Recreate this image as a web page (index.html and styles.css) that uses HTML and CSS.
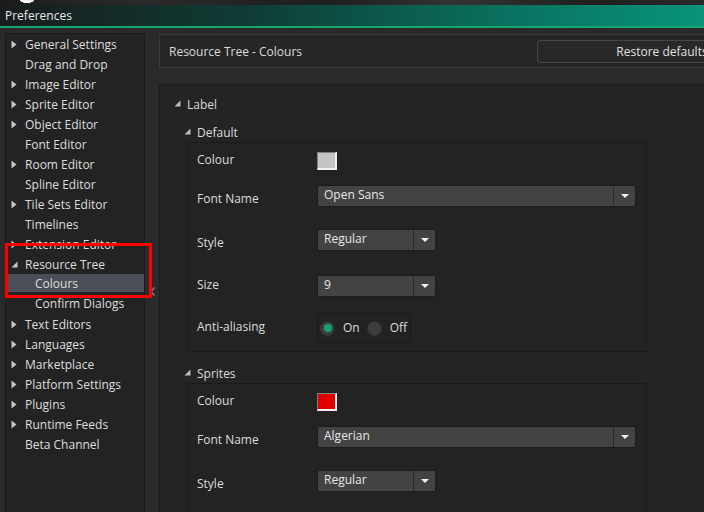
FILE: index.html
```html
<!DOCTYPE html>
<html>
<head>
<meta charset="utf-8">
<link rel="stylesheet" href="styles.css">
</head>
<body>
<div class="strip"></div>
<div class="titlebar">Preferences</div>
<div class="main">
  <div class="tree">
    <div class="item"><span class="arw"><svg width="6" height="9" viewBox="0 0 6 9"><path d="M0.5 0.5L5.5 4.5L0.5 8.5Z"/></svg></span>General Settings</div>
    <div class="item"><span class="arw"></span>Drag and Drop</div>
    <div class="item"><span class="arw"><svg width="6" height="9" viewBox="0 0 6 9"><path d="M0.5 0.5L5.5 4.5L0.5 8.5Z"/></svg></span>Image Editor</div>
    <div class="item"><span class="arw"><svg width="6" height="9" viewBox="0 0 6 9"><path d="M0.5 0.5L5.5 4.5L0.5 8.5Z"/></svg></span>Sprite Editor</div>
    <div class="item"><span class="arw"><svg width="6" height="9" viewBox="0 0 6 9"><path d="M0.5 0.5L5.5 4.5L0.5 8.5Z"/></svg></span>Object Editor</div>
    <div class="item"><span class="arw"></span>Font Editor</div>
    <div class="item"><span class="arw"><svg width="6" height="9" viewBox="0 0 6 9"><path d="M0.5 0.5L5.5 4.5L0.5 8.5Z"/></svg></span>Room Editor</div>
    <div class="item"><span class="arw"></span>Spline Editor</div>
    <div class="item"><span class="arw"><svg width="6" height="9" viewBox="0 0 6 9"><path d="M0.5 0.5L5.5 4.5L0.5 8.5Z"/></svg></span>Tile Sets Editor</div>
    <div class="item"><span class="arw"></span>Timelines</div>
    <div class="item"><span class="arw"><svg width="6" height="9" viewBox="0 0 6 9"><path d="M0.5 0.5L5.5 4.5L0.5 8.5Z"/></svg></span>Extension Editor</div>
    <div class="item"><span class="arw"><svg width="7" height="7" viewBox="0 0 7 7"><path d="M6.5 0.5V6.5H0.5Z"/></svg></span>Resource Tree</div>
    <div class="item child sel"><span class="arw"></span>Colours</div>
    <div class="item child tall"><span class="arw"></span>Confirm Dialogs</div>
    <div class="item"><span class="arw"><svg width="6" height="9" viewBox="0 0 6 9"><path d="M0.5 0.5L5.5 4.5L0.5 8.5Z"/></svg></span>Text Editors</div>
    <div class="item"><span class="arw"><svg width="6" height="9" viewBox="0 0 6 9"><path d="M0.5 0.5L5.5 4.5L0.5 8.5Z"/></svg></span>Languages</div>
    <div class="item"><span class="arw"><svg width="6" height="9" viewBox="0 0 6 9"><path d="M0.5 0.5L5.5 4.5L0.5 8.5Z"/></svg></span>Marketplace</div>
    <div class="item"><span class="arw"><svg width="6" height="9" viewBox="0 0 6 9"><path d="M0.5 0.5L5.5 4.5L0.5 8.5Z"/></svg></span>Platform Settings</div>
    <div class="item"><span class="arw"><svg width="6" height="9" viewBox="0 0 6 9"><path d="M0.5 0.5L5.5 4.5L0.5 8.5Z"/></svg></span>Plugins</div>
    <div class="item"><span class="arw"><svg width="6" height="9" viewBox="0 0 6 9"><path d="M0.5 0.5L5.5 4.5L0.5 8.5Z"/></svg></span>Runtime Feeds</div>
    <div class="item"><span class="arw"></span>Beta Channel</div>
  </div>
  <div class="splitter"><svg width="5" height="9" viewBox="0 0 5 9"><path d="M4.5 0.5L1 4.5L4.5 8.5" fill="none" stroke="#8a8a8a" stroke-width="1.2"/></svg></div>
  <div class="right">
    <div class="header">
      <div class="htitle">Resource Tree - Colours</div>
      <div class="restore">Restore defaults</div>
    </div>
    <div class="content">
      <div class="sec"><span class="tri"><svg width="7" height="7" viewBox="0 0 7 7"><path d="M6.5 0.5V6.5H0.5Z"/></svg></span>Label</div>
      <div class="sub">
        <div class="sec"><span class="tri"><svg width="7" height="7" viewBox="0 0 7 7"><path d="M6.5 0.5V6.5H0.5Z"/></svg></span>Default</div>
        <div class="group">
          <div class="row r-colour"><div class="lbl">Colour</div><div class="sw grey"></div></div>
          <div class="row r-font"><div class="lbl low">Font Name</div><div class="dd wide"><div class="val">Open Sans</div><div class="btn"><svg width="8" height="4" viewBox="0 0 8 4"><path d="M0 0H8L4 4Z"/></svg></div></div></div>
          <div class="row r-style"><div class="lbl low">Style</div><div class="dd narrow"><div class="val">Regular</div><div class="btn"><svg width="8" height="4" viewBox="0 0 8 4"><path d="M0 0H8L4 4Z"/></svg></div></div></div>
          <div class="row r-size"><div class="lbl">Size</div><div class="dd narrow"><div class="val">9</div><div class="btn"><svg width="8" height="4" viewBox="0 0 8 4"><path d="M0 0H8L4 4Z"/></svg></div></div></div>
          <div class="row r-aa"><div class="lbl">Anti-aliasing</div>
            <div class="radios"><span class="rb on"></span><span class="rtxt">On</span><span class="rb off"></span><span class="rtxt">Off</span></div>
          </div>
        </div>
        <div class="sec sec2"><span class="tri"><svg width="7" height="7" viewBox="0 0 7 7"><path d="M6.5 0.5V6.5H0.5Z"/></svg></span>Sprites</div>
        <div class="group open">
          <div class="row r-colour"><div class="lbl">Colour</div><div class="sw red"></div></div>
          <div class="row r-font"><div class="lbl low">Font Name</div><div class="dd wide"><div class="val">Algerian</div><div class="btn"><svg width="8" height="4" viewBox="0 0 8 4"><path d="M0 0H8L4 4Z"/></svg></div></div></div>
          <div class="row r-style"><div class="lbl low">Style</div><div class="dd narrow"><div class="val">Regular</div><div class="btn"><svg width="8" height="4" viewBox="0 0 8 4"><path d="M0 0H8L4 4Z"/></svg></div></div></div>
        </div>
      </div>
    </div>
  </div>
</div>
<div class="highlight"></div>
</body>
</html>
```
FILE: styles.css
```css
* { box-sizing: border-box; }
body {
  margin: 0;
  width: 704px;
  height: 512px;
  overflow: hidden;
  position: relative;
  background: #2a2a2a;
  font-family: "Open Sans", "DejaVu Sans", sans-serif;
  font-size: 12px;
  color: #dcdcdc;
}
.strip {
  height: 5px;
  background:
    radial-gradient(ellipse 10px 4px at 27px 0, #f4f4f4 70%, rgba(255,255,255,0) 75%),
    linear-gradient(90deg, #1c1c1c, #2b2b2b 20%, #1e1e1e 45%, #333 65%, #1f1f1f 85%, #2a2a2a);
}
.titlebar {
  height: 23px;
  line-height: 22px;
  padding-left: 5px;
  color: #e8e8e8;
  background: linear-gradient(90deg, #181c1c 0%, #0f3c35 35%, #0a6e5d 70%, #079479 100%);
  border-bottom: 2px solid #16a66e;
}
.main {
  display: flex;
  padding: 5px 0 0 5px;
}
.tree {
  width: 140px;
  height: 490px;
  flex: none;
  border: 1px solid #1b1b1b;
  background: #232323;
}
.item {
  height: 20px;
  display: flex;
  align-items: center;
  padding-left: 5px;
  color: #dedede;
  white-space: nowrap;
}
.item .arw {
  width: 14px;
  flex: none;
  display: flex;
  align-items: center;
}
.item svg { fill: #c8c8c8; }
.item.child { padding-left: 15px; }
.item.sel {
  height: 18px;
  background: #4b5058;
  margin-left: 1px;
  padding-left: 14px;
}
.item.tall { height: 22px; }
.splitter {
  width: 14px;
  flex: none;
  padding: 250px 0 0 5px;
}
.right {
  width: 620px;
  flex: none;
  padding-top: 1px;
  display: flex;
  flex-direction: column;
}
.header {
  height: 34px;
  border: 1px solid #3a3a3a;
  background: #262626;
  display: grid;
  grid-template-columns: 368px 250px;
  align-items: center;
  padding-left: 9px;
}
.htitle { color: #dcdcdc; }
.restore {
  height: 23px;
  border: 1px solid #474747;
  border-radius: 3px;
  background: #282828;
  text-align: center;
  line-height: 21px;
  color: #e0e0e0;
}
.content {
  margin-top: 16px;
  height: 460px;
  border: 1px solid #1d1d1d;
  background: #242424;
  padding: 9px 0 0 14px;
}
.sec {
  height: 20px;
  display: flex;
  align-items: center;
  color: #dcdcdc;
}
.sec .tri {
  width: 13px;
  flex: none;
  display: flex;
  align-items: center;
  padding-bottom: 1px;
}
.sec svg { fill: #bdbdbd; }
.sub { padding-left: 10px; margin-top: 8px; }
.sec2 { margin-top: 11px; }
.group {
  margin-left: 3px;
  width: 460px;
  border: 1px solid #1a1a1a;
  background: #232323;
  padding: 9px 0 8px 9px;
}
.group.open { padding-bottom: 60px; }
.row { display: flex; align-items: center; }
.lbl { width: 120px; flex: none; color: #dcdcdc; line-height: 16px; }
.lbl.low { padding-top: 6px; }
.r-colour { height: 18px; }
.r-font { margin-top: 15px; height: 22px; }
.r-style { margin-top: 22px; height: 22px; }
.r-size { margin-top: 24px; height: 22px; }
.r-size .lbl { padding-bottom: 2px; }
.r-aa { margin-top: 16px; height: 30px; }
.r-aa .lbl { padding-bottom: 3px; }
.sw {
  width: 20px;
  height: 18px;
  border-style: solid;
  border-width: 1px 2px 2px 1px;
  border-color: #808080 #f0f0f0 #f0f0f0 #808080;
}
.r-colour .lbl { padding-bottom: 2px; }
.sw.grey { background: #c4c4c4; }
.sw.red { background: #e00000; }
.dd {
  display: flex;
  height: 22px;
  border: 1px solid #1c1c1c;
  border-radius: 2px;
  background: #434343;
}
.dd.wide { width: 319px; }
.dd.narrow { width: 119px; }
.dd .val {
  flex: 1;
  padding-left: 6px;
  line-height: 18px;
  color: #e6e6e6;
}
.dd .btn {
  width: 22px;
  flex: none;
  border-left: 1px solid #2a2a2a;
  display: flex;
  align-items: center;
  justify-content: center;
}
.dd .btn svg { fill: #f0f0f0; }
.radios {
  width: 94px;
  height: 30px;
  display: flex;
  align-items: center;
  border: 1px solid #1a1a1a;
  border-radius: 3px;
  background: #222222;
  padding-left: 2px;
}
.rb {
  width: 15px;
  height: 15px;
  flex: none;
  border-radius: 50%;
  background: #3d3d3d;
  border: 1px solid #333;
  display: flex;
  align-items: center;
  justify-content: center;
}
.rb.on::after {
  content: "";
  width: 8px;
  height: 8px;
  border-radius: 50%;
  background: #15a36c;
}
.rb.off { margin-left: 7px; }
.rtxt { margin-left: 8px; color: #dcdcdc; padding-bottom: 1px; }
.highlight {
  position: absolute;
  left: 5px;
  top: 243px;
  width: 147px;
  height: 55px;
  border: 3px solid #ff0000;
}
```
